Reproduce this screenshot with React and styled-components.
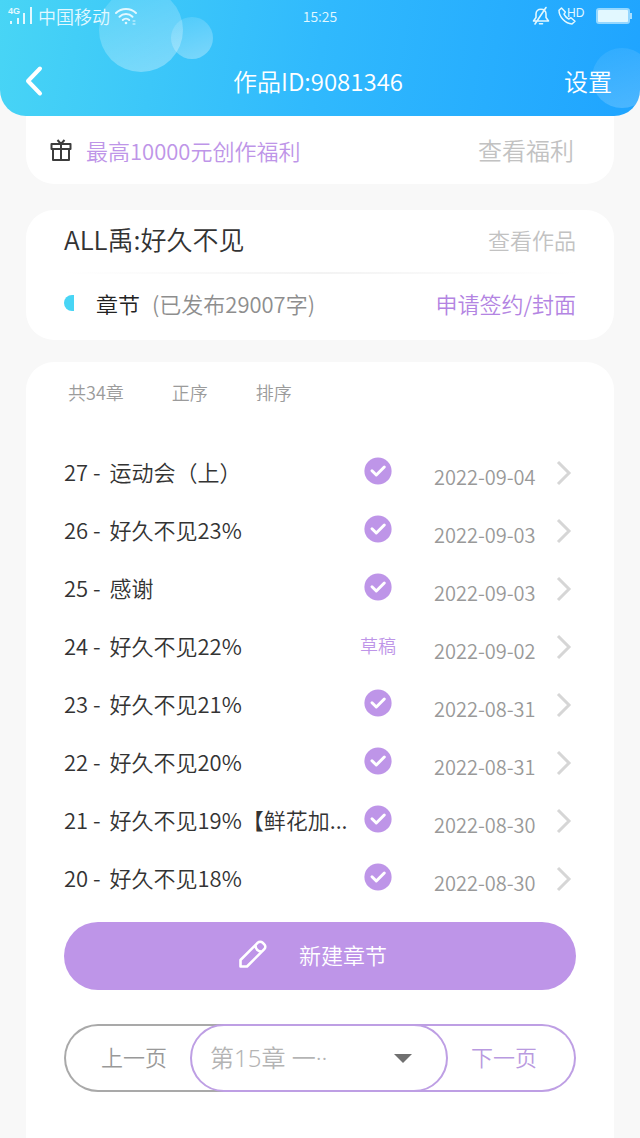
import React, { useState } from 'react';
import styled, { createGlobalStyle } from 'styled-components';

const chapters = [
    { no: 27, title: '运动会（上）', date: '2022-09-04' },
    { no: 26, title: '好久不见23%', date: '2022-09-03' },
    { no: 25, title: '感谢', date: '2022-09-03' },
    { no: 24, title: '好久不见22%', date: '2022-09-02', draft: true },
    { no: 23, title: '好久不见21%', date: '2022-08-31' },
    { no: 22, title: '好久不见20%', date: '2022-08-31' },
    { no: 21, title: '好久不见19%【鲜花加...', date: '2022-08-30' },
    { no: 20, title: '好久不见18%', date: '2022-08-30' },
];

const StatusBar = () => (
    <Status>
        <StatusGroup>
            <svg width="26" height="20" viewBox="0 0 26 20" fill="currentColor">
                <text x="0" y="8" fontSize="9" fontWeight="700" fontFamily="Liberation Sans">4G</text>
                <rect x="2" y="15" width="2" height="3" />
                <rect x="9" y="12" width="2" height="6" />
                <rect x="15" y="7" width="2" height="11" />
                <rect x="22" y="1" width="2" height="17" />
            </svg>
            <span>中国移动</span>
            <svg width="24" height="20" viewBox="0 0 24 20" fill="none" stroke="currentColor" strokeWidth="2" strokeLinecap="round">
                <path d="M2 7c5.500-5.300 14.500-5.300 20 0M5.500 10.700c3.600-3.500 9.400-3.500 13 0M8.800 14c1.800-1.700 4.600-1.700 6.400 0" />
                <circle cx="12" cy="17" r="1.300" fill="currentColor" stroke="none" />
                <path d="M19 15h2M19 18h2" strokeWidth="1" />
            </svg>
        </StatusGroup>
        <Clock>15:25</Clock>
        <StatusGroup $end>
            <svg width="18" height="20" viewBox="0 0 18 20" fill="none" stroke="currentColor" strokeWidth="1.600" strokeLinecap="round" strokeLinejoin="round">
                <path d="M1.500 15h15l-2.500-3.500V8c0-3-2-4.800-5-4.800S4 5 4 8v3.500zM14 1.500 3 18M7.500 17.800h3" />
            </svg>
            <svg width="30" height="24" viewBox="0 0 30 24" fill="none" stroke="currentColor" strokeWidth="1.500" strokeLinejoin="round">
                <path d="M3.500 4 1 6.300C1 13 7.500 19.800 14 20l3-2.800-4-3.500-2.300 1.400C8.600 14 7 12.200 6 10.200L7.300 8z" />
                <text x="9" y="13" fontSize="12" fontFamily="Liberation Sans" fill="currentColor" stroke="none">HD</text>
            </svg>
            <svg width="36" height="18" viewBox="0 0 36 18" fill="currentColor">
                <rect x="0" y="1" width="34" height="16" rx="3" opacity="0.600" />
                <rect x="2" y="3" width="30" height="12" rx="1" />
                <rect x="34" y="6" width="2" height="6" opacity="0.700" />
            </svg>
        </StatusGroup>
    </Status>
);

const App = () => {
    const [page, setPage] = useState('15');

    return (
        <>
            <GlobalStyle />
            <Header>
                <Bubble $x="99px" $y="-12px" $size="84px" />
                <Bubble $x="171px" $y="17px" $size="42px" />
                <Bubble $x="calc(100% - 48px)" $y="48px" $size="60px" $faint />
                <StatusBar />
                <NavBar>
                    <BackButton aria-label="返回">
                        <svg width="20" height="32" viewBox="0 0 20 32" fill="none" stroke="currentColor" strokeWidth="4" strokeLinecap="round" strokeLinejoin="round">
                            <path d="M16 3.500 4 16l12 12.500" />
                        </svg>
                    </BackButton>
                    <Title>作品ID:9081346</Title>
                    <SettingButton>设置</SettingButton>
                </NavBar>
            </Header>

            <Main>
                <WelfareCard>
                    <svg width="22" height="24" viewBox="0 0 22 24" fill="none" stroke="#3c3c3c" strokeWidth="2" strokeLinejoin="round">
                        <path d="M1.500 6h19v5h-19zM3 11v11h16V11M11 6v16M7.500 2 11 6l3.500-4" />
                    </svg>
                    <WelfareText>最高10000元创作福利</WelfareText>
                    <MoreLink href="#welfare" $large>查看福利</MoreLink>
                </WelfareCard>

                <WorkCard>
                    <WorkRow>
                        <WorkName>ALL禹:好久不见</WorkName>
                        <MoreLink href="#work">查看作品</MoreLink>
                    </WorkRow>
                    <Divider />
                    <WorkRow>
                        <HalfDot />
                        <SectionName>章节</SectionName>
                        <WordCount>(已发布29007字)</WordCount>
                        <ApplyLink href="#apply">申请签约/封面</ApplyLink>
                    </WorkRow>
                </WorkCard>

                <ChapterCard>
                    <Toolbar>
                        <span>共34章</span>
                        <button>正序</button>
                        <button>排序</button>
                    </Toolbar>

                    <ChapterList>
                        {chapters.map((item) => (
                            <ChapterRow key={item.no}>
                                <ChapterName><ChapterNo>{item.no} -</ChapterNo> {item.title}</ChapterName>
                                <State>
                                    {item.draft
                                        ? '草稿'
                                        : <svg width="28" height="28" viewBox="0 0 28 28" role="img" aria-label="已发布">
                                            <circle cx="14" cy="14" r="13.600" fill="#be95e8" />
                                            <path d="M8 13.800l4.300 4.200 8-8" fill="none" stroke="#fff" strokeWidth="3" strokeLinecap="round" strokeLinejoin="round" />
                                        </svg>
                                    }
                                </State>
                                <ChapterDate>{item.date}</ChapterDate>
                                <Arrow width="16" height="26" viewBox="0 0 16 26" fill="none" stroke="#d6d6d6" strokeWidth="3">
                                    <path d="M2 2l11 11L2 24" />
                                </Arrow>
                            </ChapterRow>
                        ))}
                    </ChapterList>

                    <CreateButton>
                        <svg width="28" height="28" viewBox="0 0 28 28" fill="none" stroke="currentColor" strokeWidth="2.600" strokeLinejoin="round">
                            <path d="M1.500 26.500v-6.500L18.800 2.700a3.400 3.400 0 0 1 4.800 0l1.700 1.700a3.400 3.400 0 0 1 0 4.800L8 26.500zM16.500 5.500c0 3.500 2.500 6 6 6" />
                        </svg>
                        新建章节
                    </CreateButton>

                    <Pager>
                        <PrevButton>上一页</PrevButton>
                        <SelectWrap>
                            <PageSelect aria-label="选择章节" value={page} onChange={(e) => setPage(e.target.value)}>
                                <option value="15">第15章 一··</option>
                            </PageSelect>
                            <Caret width="18" height="10" viewBox="0 0 18 10">
                                <path d="M0 0h18L9 9z" fill="#707070" />
                            </Caret>
                        </SelectWrap>
                        <NextButton>下一页</NextButton>
                    </Pager>
                </ChapterCard>
            </Main>
        </>
    );
};

const GlobalStyle = createGlobalStyle`
    * {
        box-sizing: border-box;
    }
    body {
        margin: 0;
        background: #f8f8f8;
        font-family: 'Noto Sans CJK SC', sans-serif;
        font-weight: 350;
        font-size: 22px;
        line-height: 32px;
        color: #333;
    }
    button, select {
        font: inherit;
        color: inherit;
        background: none;
        border: none;
        padding: 0;
        cursor: pointer;
    }
    a {
        text-decoration: none;
    }
    svg {
        display: block;
        flex-shrink: 0;
    }
`

const Header = styled.header`
    position: relative;
    overflow: hidden;
    border-radius: 0 0 26px 26px;
    background: linear-gradient(100deg, #48d5f5 0%, #30b9fd 50%, #1fa4ff 100%);
    color: #fff;
`

const Bubble = styled.div`
    position: absolute;
    left: ${(props) => props.$x};
    top: ${(props) => props.$y};
    width: ${(props) => props.$size};
    height: ${(props) => props.$size};
    border-radius: 50%;
    background: linear-gradient(160deg, rgba(255, 255, 255, 0.1), rgba(255, 255, 255, 0.34));
    opacity: ${(props) => (props.$faint ? 0.6 : 1)};
`

const Status = styled.div`
    position: relative;
    display: grid;
    grid-template-columns: 1fr auto 1fr;
    align-items: center;
    height: 32px;
    padding: 0 8px;
    font-size: 18px;
    color: #e2f8ff;
`

const StatusGroup = styled.div`
    display: flex;
    align-items: center;
    gap: ${(props) => (props.$end ? '8px' : '4px')};
    justify-content: ${(props) => (props.$end ? 'flex-end' : 'flex-start')};
`

const Clock = styled.time`
    font-size: 14px;
`

const NavBar = styled.div`
    position: relative;
    display: grid;
    grid-template-columns: 1fr auto 1fr;
    align-items: center;
    height: 84px;
    padding: 14px 28px 0 24px;
    font-size: 24px;
`

const BackButton = styled.button`
    justify-self: start;
`

const Title = styled.h1`
    margin: 0;
    font-size: 24px;
    font-weight: inherit;
`

const SettingButton = styled.button`
    justify-self: end;
`

const Main = styled.main`
    padding: 0 26px;
`

const Card = styled.section`
    background: #fff;
    border-radius: 28px;
`

const WelfareCard = styled(Card)`
    display: flex;
    align-items: center;
    height: 68px;
    padding: 0 40px 0 24px;
    border-radius: 0 0 28px 28px;
`

const WelfareText = styled.span`
    margin-left: 14px;
    color: #be95e8;
`

const MoreLink = styled.a`
    margin-left: auto;
    font-size: ${(props) => (props.$large ? '24px' : '22px')};
    color: #c2c2c2;
`

const WorkCard = styled(Card)`
    margin-top: 26px;
    padding: 0 38px 4px;
`

const WorkRow = styled.div`
    display: flex;
    align-items: center;
    height: 62px;
    padding-bottom: 4px;
`

const WorkName = styled.h2`
    margin: 0;
    font-size: 26px;
    font-weight: inherit;
`

const Divider = styled.div`
    height: 2px;
    background: linear-gradient(90deg, #fff, #f3f3f3 50%, #fff);
`

const HalfDot = styled.span`
    width: 10px;
    height: 16px;
    border-radius: 8px 0 0 8px;
    background: #48d5f5;
`

const SectionName = styled.span`
    margin-left: 22px;
    color: #222;
`

const WordCount = styled.span`
    margin-left: 12px;
    color: #8e8e8e;
`

const ApplyLink = styled.a`
    margin-left: auto;
    color: #b384e2;
`

const ChapterCard = styled(Card)`
    margin-top: 22px;
    padding: 0 38px 90px;
`

const Toolbar = styled.div`
    display: flex;
    align-items: center;
    gap: 48px;
    height: 60px;
    padding-left: 4px;
    font-size: 18px;
    color: #9b9b9b;
`

const ChapterList = styled.ul`
    list-style: none;
    margin: 0;
    padding: 20px 0 16px;
`

const ChapterRow = styled.li`
    display: grid;
    grid-template-columns: 1fr 48px 154px 20px;
    align-items: center;
    height: 58px;
`

const ChapterName = styled.span`
    overflow: hidden;
    white-space: nowrap;
    text-overflow: ellipsis;
`

const ChapterNo = styled.span`
    margin-right: 4px;
`

const State = styled.span`
    display: flex;
    justify-content: center;
    font-size: 18px;
    color: #be95e8;
`

const ChapterDate = styled.time`
    padding: 12px 0 0 32px;
    font-size: 20px;
    color: #999;
`

const Arrow = styled.svg`
    margin-top: 4px;
`

const CreateButton = styled.button`
    display: flex;
    align-items: center;
    justify-content: center;
    gap: 32px;
    width: 100%;
    height: 68px;
    padding: 0 14px 4px 0;
    border-radius: 34px;
    background: #be95e8;
    color: #fff;
`

const Pager = styled.div`
    display: grid;
    grid-template-columns: 126px 1fr 128px;
    height: 68px;
    margin-top: 34px;
`

const PageButton = styled.button`
    border: 2px solid;
`

const PrevButton = styled(PageButton)`
    margin-right: -100px;
    padding: 0 88px 4px 0;
    border-color: #a9a9a9;
    border-right: none;
    border-radius: 34px 0 0 34px;
    color: #999;
`

const NextButton = styled(PageButton)`
    margin-left: -100px;
    padding: 0 14px 4px 100px;
    border-color: #be9fe4;
    border-left: none;
    border-radius: 0 34px 34px 0;
    color: #b99ae0;
`

const SelectWrap = styled.div`
    position: relative;
    z-index: 1;
`

const PageSelect = styled.select`
    appearance: none;
    width: 100%;
    height: 100%;
    padding: 0 60px 0 18px;
    border: 2px solid #be9fe4;
    border-radius: 34px;
    font-family: 'Noto Sans', 'Noto Sans CJK SC', sans-serif;
    font-size: 24px;
    color: #b4b4b4;
`

const Caret = styled.svg`
    position: absolute;
    right: 36px;
    top: 30px;
    pointer-events: none;
`

export default App;
